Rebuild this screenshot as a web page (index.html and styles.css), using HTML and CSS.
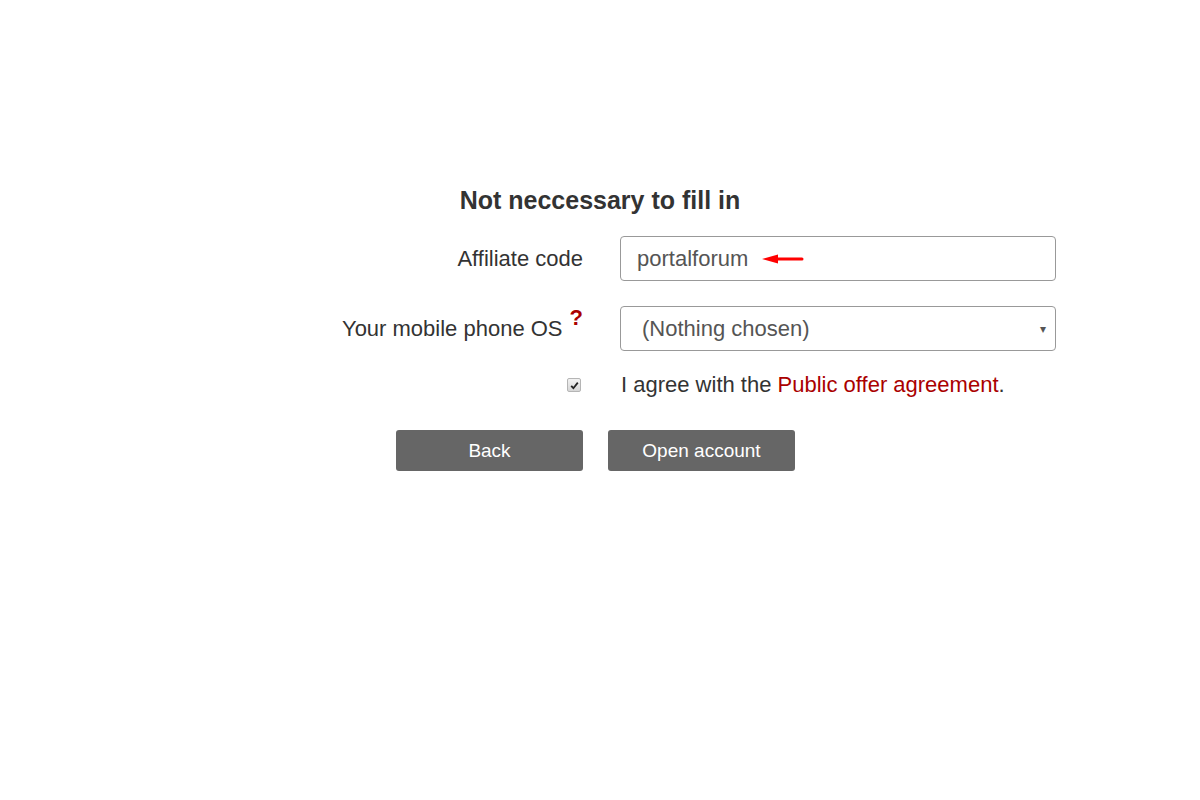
FILE: index.html
```html
<!DOCTYPE html>
<html lang="en">
<head>
    <meta charset="UTF-8">
    <title>Open account</title>
    <link rel="stylesheet" href="styles.css">
</head>
<body>
    <div class="page">
        <h2 class="title">Not neccessary to fill in</h2>
        <form class="reg-form">
            <div class="row">
                <label class="row-label" for="affiliate">Affiliate code</label>
                <div class="field">
                    <div class="input-box">
                        <span class="input-value">portalforum</span>
                        <svg class="arrow" width="44" height="12" viewBox="0 0 44 12">
                            <path d="M12 6 H41" stroke="#f00" stroke-width="3" stroke-linecap="round"/>
                            <path d="M1 6 L17 1.5 L17 10.5 Z" fill="#f00"/>
                        </svg>
                    </div>
                </div>
            </div>
            <div class="row row-os">
                <label class="row-label" for="os">Your mobile phone OS <sup class="hint">?</sup></label>
                <div class="field">
                    <div class="select-box">
                        <span class="select-value">(Nothing chosen)</span>
                        <span class="caret">&#9662;</span>
                    </div>
                </div>
            </div>
            <div class="row row-check">
                <div class="row-label">
                    <span class="checkbox">
                        <svg width="9" height="9" viewBox="0 0 9 9"><path d="M1.2 4.8 L3.4 7.2 L7.8 1.6" stroke="#222" stroke-width="1.8" fill="none"/></svg>
                    </span>
                </div>
                <div class="field agree">I agree with the <a href="#">Public offer agreement</a>.</div>
            </div>
            <div class="buttons">
                <button type="button" class="btn">Back</button>
                <button type="button" class="btn">Open account</button>
            </div>
        </form>
    </div>
</body>
</html>
```

FILE: styles.css
```css
body {
    margin: 0;
    font-family: "Liberation Sans", Arial, sans-serif;
    color: #333;
    background: #fff;
}

.page {
    padding-top: 185px;
}

.title {
    margin: 0 0 21px;
    text-align: center;
    font-size: 25px;
    line-height: 30px;
    font-weight: bold;
    color: #333;
}

.reg-form {
    width: 660px;
    margin-left: 396px;
    display: flex;
    flex-direction: column;
}

.row {
    display: grid;
    grid-template-columns: 187px 436px;
    column-gap: 37px;
    align-items: center;
    margin-bottom: 25px;
}

.row-label {
    display: flex;
    justify-content: flex-end;
    align-items: center;
    white-space: nowrap;
    font-size: 22px;
    line-height: 26px;
    color: #333;
}

.hint {
    color: #a00;
    font-weight: bold;
    font-size: 22px;
    line-height: 1;
    margin-left: 7px;
    align-self: flex-start;
    position: relative;
    top: -9px;
}

.input-box,
.select-box {
    height: 43px;
    border: 1px solid #999;
    border-radius: 4px;
    display: flex;
    align-items: center;
    font-size: 22px;
    color: #555;
}

.input-box {
    padding-left: 16px;
}

.select-box {
    padding-left: 21px;
    padding-right: 9px;
    justify-content: space-between;
}

.arrow {
    margin-left: 13px;
    margin-top: 0;
}

.caret {
    font-size: 12px;
    color: #555;
}

.row-os {
    margin-bottom: 21px;
}

.row-check {
    margin-bottom: 32px;
}

.checkbox {
    display: inline-flex;
    align-items: center;
    justify-content: center;
    width: 12px;
    height: 12px;
    margin-right: 2px;
    border: 1px solid #b5b5b5;
    border-radius: 2px;
    background: linear-gradient(#f2f2f2, #d6d6d6);
}

.agree {
    font-size: 22px;
    line-height: 26px;
    color: #333;
    padding-left: 1px;
}

.agree a {
    color: #a00;
    text-decoration: none;
}

.buttons {
    display: flex;
    gap: 25px;
}

.btn {
    width: 187px;
    height: 41px;
    border: none;
    border-radius: 3px;
    background: #666;
    color: #fff;
    font-family: "Liberation Sans", Arial, sans-serif;
    font-size: 19px;
    cursor: pointer;
}
```
